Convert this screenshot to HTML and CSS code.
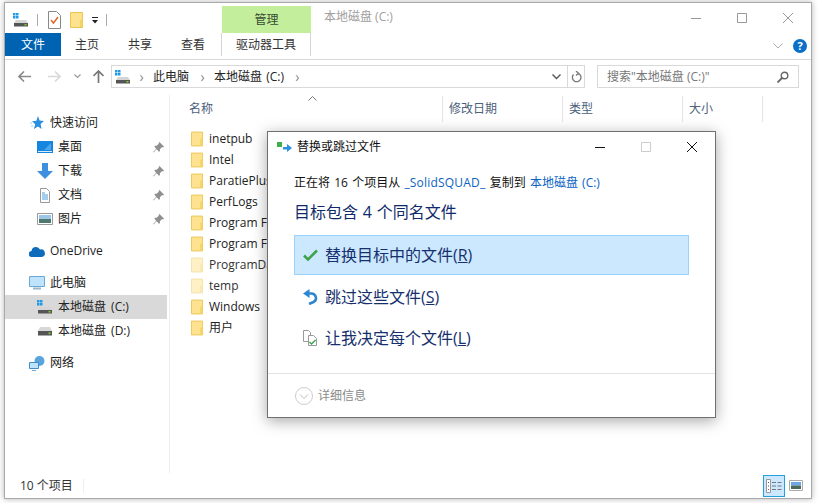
FILE: index.html
```html
<!DOCTYPE html>
<html lang="zh-CN">
<head>
    <meta charset="UTF-8">
    <title>本地磁盘 (C:)</title>
    <link rel="stylesheet" href="styles.css">
</head>
<body>
    <svg class="defs" width="0" height="0">
        <symbol id="folder" viewBox="0 0 13 16">
            <path d="M.5.5h12v15H.5z" fill="#ffe28f" stroke="#eac550"/>
            <path d="M10 15V7.500h2.500V15z" fill="#f7d264"/>
        </symbol>
        <symbol id="drive-win" viewBox="0 0 16 14">
            <path d="M0 0h2.500v2.500H0zM3 0h2.500v2.500H3zM0 3h2.500v2.500H0zM3 3h2.500v2.500H3z" fill="#1e9be8"/>
            <path d="M3 7h10l2 3H1z" fill="#d4d4d4"/>
            <path d="M1 10h14v3.500H1z" fill="#555"/>
            <path d="M11.500 11h2v1.500h-2z" fill="#7ed321"/>
        </symbol>
        <symbol id="pin" viewBox="0 0 12 12">
            <path d="M7 0l5 5-1 1-1-.5L7.500 8 7.500 10l-1 .5L4 8l-3.500 3.500L0 11l3.500-3.500L1.500 5 2 4l2 0 2.500-2.500L6 1z" fill="#8f8f8f"/>
        </symbol>
    </svg>

    <div class="window">
        <header class="titlebar">
            <div class="quick">
                <svg class="ic-drive" width="16" height="14"><use href="#drive-win"/></svg>
                <i class="vsep"></i>
                <svg class="ic-doc" width="13" height="18" viewBox="0 0 13 18">
                    <path d="M.5.5h8l4 4v13H.5z" fill="#fff" stroke="#888"/>
                    <path d="M3 9l2.500 3L10 6" fill="none" stroke="#e2622a" stroke-width="1.400"/>
                </svg>
                <svg class="ic-qfolder" width="13" height="16"><use href="#folder"/></svg>
                <svg class="ic-caret" width="8" height="7" viewBox="0 0 8 7">
                    <path d="M1 0h6v1H1zM1 3h6L4 6.500z" fill="#222"/>
                </svg>
                <i class="vsep"></i>
            </div>
            <div class="context-tab">管理</div>
            <div class="wintitle">本地磁盘 (C:)</div>
            <div class="controls">
                <svg width="10" height="10" viewBox="0 0 10 10"><path d="M0 5.500h10" stroke="#999"/></svg>
                <svg width="10" height="10" viewBox="0 0 10 10"><path d="M.5.500h9v9h-9z" fill="none" stroke="#999"/></svg>
                <svg width="10" height="10" viewBox="0 0 10 10"><path d="M0 0l10 10M10 0L0 10" stroke="#999"/></svg>
            </div>
        </header>

        <nav class="ribbon">
            <div class="tab tab-file">文件</div>
            <div class="tab tab-home">主页</div>
            <div class="tab tab-share">共享</div>
            <div class="tab tab-view">查看</div>
            <div class="tab tab-tools">驱动器工具</div>
            <svg class="ribbon-chev" width="10" height="6" viewBox="0 0 10 6"><path d="M.5.500L5 5 9.500.5" fill="none" stroke="#aaa"/></svg>
            <div class="help">?</div>
        </nav>

        <div class="addressbar">
            <div class="navs">
                <svg width="13" height="11" viewBox="0 0 13 11"><path d="M6 .5L1 5.500l5 5M1 5.500h12" fill="none" stroke="#8a8a8a" stroke-width="1.600"/></svg>
                <svg class="nav-fwd" width="13" height="11" viewBox="0 0 13 11"><path d="M7 .5l5 5-5 5M12 5.500H0" fill="none" stroke="#d8d8d8" stroke-width="1.600"/></svg>
                <svg class="nav-down" width="7" height="5" viewBox="0 0 7 5"><path d="M.5.500l3 3 3-3" fill="none" stroke="#999" stroke-width="1.200"/></svg>
                <svg class="nav-up" width="11" height="13" viewBox="0 0 11 13"><path d="M.5 6l5-5 5 5M5.500 1v12" fill="none" stroke="#777" stroke-width="1.700"/></svg>
            </div>
            <div class="pathbox">
                <svg class="path-drive" width="16" height="14"><use href="#drive-win"/></svg>
                <span class="crumb-sep">›</span>
                <span class="crumb">此电脑</span>
                <span class="crumb-sep">›</span>
                <span class="crumb">本地磁盘 (C:)</span>
                <span class="crumb-sep">›</span>
                <svg class="path-chev" width="9" height="6" viewBox="0 0 9 6"><path d="M.5.500l4 4 4-4" fill="none" stroke="#555" stroke-width="1.400"/></svg>
                <div class="refresh">
                    <svg width="11" height="12" viewBox="0 0 11 12"><path d="M7 2.300A4.300 4.300 0 1 1 2.500 3.500M5 0l2.500 2.300L5 4.500" fill="none" stroke="#777" stroke-width="1.300"/></svg>
                </div>
            </div>
            <div class="searchbox">
                <span>搜索"本地磁盘 (C:)"</span>
                <svg width="12" height="12" viewBox="0 0 12 12"><circle cx="7.500" cy="4.500" r="3.300" fill="none" stroke="#666" stroke-width="1.400"/><path d="M5 7l-4.500 4.500" stroke="#666" stroke-width="1.800"/></svg>
            </div>
        </div>

        <div class="main">
            <aside class="sidebar">
                <div class="nav-item">
                    <svg class="nav-ic" width="14" height="14" viewBox="0 0 14 14"><path d="M8 0l1.600 4.400L14 5l-3.400 3 1 5-3.600-2.600L4 13l1.200-4.800L2 5.300l4.400-.5z" fill="#2b8fe0"/><path d="M0 7h2M1 10h2" stroke="#9fd0f5"/></svg>
                    <span>快速访问</span>
                </div>
                <div class="nav-item sub">
                    <svg class="nav-ic" width="16" height="13" viewBox="0 0 16 13"><path d="M0 0h16v12H0z" fill="#1685e0"/><path d="M1 10h14v1H1z" fill="#d6ecfb"/><path d="M7 9l7-7v7z" fill="#4aa6ea"/></svg>
                    <span>桌面</span>
                    <svg class="pin" width="11" height="11"><use href="#pin"/></svg>
                </div>
                <div class="nav-item sub">
                    <svg class="nav-ic" width="16" height="16" viewBox="0 0 16 16"><path d="M5 0h6v8h5l-8 8-8-8h5z" fill="#3d8fe0"/></svg>
                    <span>下载</span>
                    <svg class="pin" width="11" height="11"><use href="#pin"/></svg>
                </div>
                <div class="nav-item sub">
                    <svg class="nav-ic" width="16" height="15" viewBox="0 0 16 15"><path d="M3.500.5h6l3 3v11h-9z" fill="#fff" stroke="#999"/><path d="M5 5h3M5 7h6M5 9h6M5 11h6" stroke="#4a9ad8"/></svg>
                    <span>文档</span>
                    <svg class="pin" width="11" height="11"><use href="#pin"/></svg>
                </div>
                <div class="nav-item sub">
                    <svg class="nav-ic" width="16" height="12" viewBox="0 0 16 12"><path d="M.5.500h15v11H.5z" fill="#fff" stroke="#999"/><path d="M2 2h12v4H2z" fill="#9cc7e8"/><path d="M2 6h12v4H2z" fill="#4d7a6c"/></svg>
                    <span>图片</span>
                    <svg class="pin" width="11" height="11"><use href="#pin"/></svg>
                </div>
                <div class="nav-item group">
                    <svg class="nav-ic" width="16" height="11" viewBox="0 0 16 11"><path d="M3 11a3 3 0 0 1-.5-6A4.500 4.500 0 0 1 11 3.500 3.800 3.800 0 0 1 13 11z" fill="#0f6cbd"/></svg>
                    <span>OneDrive</span>
                </div>
                <div class="nav-item group">
                    <svg class="nav-ic" width="16" height="14" viewBox="0 0 16 14"><path d="M.5.500h15v10H.5z" fill="#bfe3fa" stroke="#6aa9d6"/><path d="M4 12.500h8" stroke="#9ab6cc" stroke-width="2"/></svg>
                    <span>此电脑</span>
                </div>
                <div class="nav-item sub selected">
                    <svg class="nav-ic" width="16" height="14"><use href="#drive-win"/></svg>
                    <span>本地磁盘 (C:)</span>
                </div>
                <div class="nav-item sub">
                    <svg class="nav-ic" width="16" height="9" viewBox="0 0 16 9"><path d="M3 0h10l2 4H1z" fill="#d8d8d8"/><path d="M1 4h14v4.500H1z" fill="#555"/><path d="M11.500 5.500h2V7h-2z" fill="#7ed321"/></svg>
                    <span>本地磁盘 (D:)</span>
                </div>
                <div class="nav-item group">
                    <svg class="nav-ic" width="16" height="15" viewBox="0 0 16 15"><circle cx="10.500" cy="5" r="5" fill="#5aa4de"/><path d="M.5 6.500h9v6h-9z" fill="#bfe3fa" stroke="#3f8ccb"/><path d="M3 14.500h4" stroke="#7aa8cc"/></svg>
                    <span>网络</span>
                </div>
            </aside>

            <section class="files">
                <div class="columns">
                    <svg class="sort" width="9" height="5" viewBox="0 0 9 5"><path d="M.5 4.500l4-4 4 4" fill="none" stroke="#777"/></svg>
                    <div class="col col-name">名称</div>
                    <div class="col col-date">修改日期</div>
                    <div class="col col-type">类型</div>
                    <div class="col col-size">大小</div>
                </div>
                <ul class="list">
                    <li><svg width="12" height="16"><use href="#folder"/></svg>inetpub</li>
                    <li><svg width="12" height="16"><use href="#folder"/></svg>Intel</li>
                    <li><svg width="12" height="16"><use href="#folder"/></svg>ParatiePlus</li>
                    <li><svg width="12" height="16"><use href="#folder"/></svg>PerfLogs</li>
                    <li><svg width="12" height="16"><use href="#folder"/></svg>Program Files</li>
                    <li><svg width="12" height="16"><use href="#folder"/></svg>Program Files (x86)</li>
                    <li class="hidden-item"><svg width="12" height="16"><use href="#folder"/></svg><span>ProgramData</span></li>
                    <li class="hidden-item"><svg width="12" height="16"><use href="#folder"/></svg><span>temp</span></li>
                    <li><svg width="12" height="16"><use href="#folder"/></svg>Windows</li>
                    <li><svg width="12" height="16"><use href="#folder"/></svg>用户</li>
                </ul>
            </section>
        </div>

        <footer class="statusbar">
            <span class="count">10 个项目</span>
            <i class="status-sep"></i>
            <div class="views">
                <div class="view-btn active">
                    <svg width="16" height="14" viewBox="0 0 16 14"><path d="M.5.500h4v13h-4z" fill="#fff" stroke="#999"/><path d="M2 3h1v1H2zM2 6.500h1v1H2z" fill="#555"/><path d="M2 10h1v1H2z" fill="#c33"/><path d="M6 3.500h4M11.500 3.500h4M6 7h4M11.500 7h4M6 10.500h4M11.500 10.500h4" stroke="#777"/></svg>
                </div>
                <svg width="14" height="11" viewBox="0 0 14 11"><path d="M.5.500h13v10H.5z" fill="#fff" stroke="#aaa"/><path d="M2 2h10v3.500H2z" fill="#6aa6e8"/><path d="M2 5.500h10V9H2z" fill="#4a6a5a"/></svg>
            </div>
        </footer>
    </div>

    <div class="dialog">
        <div class="dlg-title">
            <svg width="15" height="10" viewBox="0 0 15 10"><path d="M0 0h5v5H0z" fill="#3fae49"/><path d="M6 5h4V2l5 4-5 4V7.500H6z" fill="#2f8fe0"/></svg>
            <span class="dlg-name">替换或跳过文件</span>
            <div class="dlg-controls">
                <svg width="10" height="10" viewBox="0 0 10 10"><path d="M0 5.500h10" stroke="#111"/></svg>
                <svg width="10" height="10" viewBox="0 0 10 10"><path d="M.5.500h9v9h-9z" fill="none" stroke="#ccc"/></svg>
                <svg width="10" height="10" viewBox="0 0 10 10"><path d="M0 0l10 10M10 0L0 10" stroke="#111"/></svg>
            </div>
        </div>
        <div class="dlg-body">
            <p class="dlg-status">正在将 16 个项目从 <a class="src">_SolidSQUAD_</a> 复制到 <a>本地磁盘 (C:)</a></p>
            <h2 class="dlg-heading">目标包含 4 个同名文件</h2>
            <div class="option active">
                <svg width="15" height="12" viewBox="0 0 15 12"><path d="M1 6.500l4 4L14 1.500" fill="none" stroke="#3fa34d" stroke-width="2.600"/></svg>
                <span>替换目标中的文件(<u>R</u>)</span>
            </div>
            <div class="option">
                <svg width="15" height="16" viewBox="0 0 15 16"><path d="M0 4.500L6.500 0v9z" fill="#2f86d0"/><path d="M5 4.500h3.500a4.500 4.500 0 0 1 2 8.500L6 15" fill="none" stroke="#2f86d0" stroke-width="2.600"/></svg>
                <span>跳过这些文件(<u>S</u>)</span>
            </div>
            <div class="option">
                <svg width="15" height="16" viewBox="0 0 15 16"><path d="M.5.500h5l2 2v9h-7z" fill="#fff" stroke="#999"/><path d="M5.500 5.500h5l3 3v7h-8z" fill="#fff" stroke="#999"/><path d="M6.500 12l2 2 4-4" fill="none" stroke="#3fa34d" stroke-width="1.500"/></svg>
                <span>让我决定每个文件(<u>L</u>)</span>
            </div>
        </div>
        <div class="dlg-footer">
            <svg width="18" height="18" viewBox="0 0 18 18"><circle cx="9" cy="9" r="8.500" fill="#fff" stroke="#ccc"/><path d="M5 7.500l4 4 4-4" fill="none" stroke="#bbb"/></svg>
            <span>详细信息</span>
        </div>
    </div>
</body>
</html>
```

FILE: styles.css
```css
* {
    margin: 0;
    padding: 0;
    box-sizing: border-box;
}

body {
    position: relative;
    width: 818px;
    height: 503px;
    overflow: hidden;
    padding: 2px 6px 4px 4px;
    background-color: #fff;
    color: #1a1a1a;
    font: 12px/16px "Open Sans", "Noto Sans CJK SC", sans-serif;
}

.defs {
    position: absolute;
}

.window {
    display: flex;
    flex-direction: column;
    height: 497px;
    background-color: #fff;
    border: 1px solid #a9a9a9;
    box-shadow: 0 0 6px rgba(0, 0, 0, 0.3);
}

/* title bar */
.titlebar {
    display: flex;
    align-items: flex-end;
    height: 30px;
    flex: none;
}

.quick {
    display: flex;
    align-items: center;
    width: 217px;
    height: 27px;
    padding-left: 8px;
    flex: none;
}

.quick svg {
    display: block;
}

.vsep {
    width: 1px;
    height: 12px;
    margin: 0 10px 0 8px;
    background-color: #aaa;
}

.ic-qfolder {
    margin-left: 9px;
}

.ic-caret {
    margin: 2px 0 0 8px;
}

.ic-caret + .vsep {
    margin-left: 7px;
}

.context-tab {
    width: 89px;
    height: 27px;
    flex: none;
    background-color: #c3ee9b;
    color: #3a4a32;
    text-align: center;
    line-height: 27px;
}

.wintitle {
    margin-left: 13px;
    height: 27px;
    color: #a0a0a0;
    line-height: 21px;
}

.controls {
    display: flex;
    gap: 36px;
    margin-left: auto;
    padding-right: 18px;
    align-self: center;
}

.controls svg {
    display: block;
}

/* ribbon tabs */
.ribbon {
    display: flex;
    height: 27px;
    flex: none;
    align-items: flex-start;
    border-bottom: 1px solid #dadada;
}

.tab {
    height: 23px;
    line-height: 23px;
    color: #333;
    text-align: center;
}

.tab-file {
    width: 56px;
    background-color: #0063b1;
    color: #fff;
}

.tab-home {
    margin-left: 14px;
}

.tab-share {
    margin-left: 29px;
}

.tab-view {
    margin-left: 29px;
}

.tab-tools {
    width: 90px;
    margin-left: 16px;
    border-left: 1px solid #d5d5d5;
    border-right: 1px solid #d5d5d5;
}

.ribbon-chev {
    margin: 10px 0 0 auto;
}

.help {
    width: 14px;
    height: 14px;
    margin: 6px 4px 0 10px;
    border-radius: 50%;
    background-color: #0a6fc9;
    color: #fff;
    font-size: 11px;
    font-weight: 700;
    line-height: 14px;
    text-align: center;
}

/* address bar */
.addressbar {
    display: flex;
    align-items: flex-start;
    height: 35px;
    flex: none;
    padding-top: 5px;
}

.navs {
    display: flex;
    align-items: center;
    width: 106px;
    height: 23px;
    padding-left: 13px;
    flex: none;
}

.nav-fwd {
    margin-left: 17px;
}

.nav-down {
    margin-left: 13px;
}

.nav-up {
    margin-left: 12px;
}

.pathbox {
    display: flex;
    align-items: center;
    width: 474px;
    height: 23px;
    flex: none;
    border: 1px solid #d9d9d9;
    color: #222;
}

.path-drive {
    margin-left: 3px;
}

.crumb-sep {
    width: 9px;
    margin: 0 7px 0 6px;
    color: #888;
    font-size: 14px;
    text-align: center;
}

.crumb + .crumb-sep {
    margin-left: 9px;
}

.crumb {
    word-spacing: 1px;
}

.path-chev {
    margin: 0 6px 0 auto;
}

.refresh {
    display: flex;
    align-items: center;
    justify-content: center;
    width: 17px;
    height: 100%;
    border-left: 1px solid #d9d9d9;
}

.searchbox {
    display: flex;
    align-items: center;
    justify-content: space-between;
    width: 202px;
    height: 23px;
    margin-left: 12px;
    padding: 0 9px;
    border: 1px solid #d9d9d9;
    color: #777;
}

/* main area */
.main {
    display: flex;
    flex: 1;
    min-height: 0;
}

.sidebar {
    width: 165px;
    flex: none;
    padding-top: 16px;
    border-right: 1px solid #efefef;
}

.nav-item {
    display: flex;
    align-items: center;
    height: 24px;
    width: 162px;
    padding-left: 24px;
    color: #222;
}

.nav-ic {
    width: 16px;
    margin-right: 5px;
    flex: none;
}

.sub {
    padding-left: 32px;
    word-spacing: 2px;
}

.group {
    margin-top: 8px;
}

.selected {
    background-color: #d9d9d9;
}

.pin {
    margin-left: auto;
    margin-right: 3px;
}

.files {
    flex: 1;
    min-width: 0;
}

.columns {
    position: relative;
    display: flex;
    height: 27px;
    margin-top: 1px;
    padding-left: 13px;
    color: #4c607a;
}

.col {
    height: 26px;
    padding-left: 6px;
    line-height: 25px;
    border-right: 1px solid #e5e5e5;
}

.col-name {
    width: 260px;
}

.col-date,
.col-type {
    width: 120px;
}

.col-size {
    width: 80px;
}

.sort {
    position: absolute;
    left: 138px;
    top: 0;
}

.list {
    list-style: none;
    padding: 5px 0 0 21px;
}

.list li {
    display: flex;
    align-items: center;
    gap: 6px;
    height: 21px;
    white-space: nowrap;
    color: #222;
}

.hidden-item svg {
    opacity: 0.5;
}

.hidden-item span {
    color: #333;
}

/* status bar */
.statusbar {
    display: flex;
    align-items: center;
    height: 25px;
    flex: none;
    padding-left: 15px;
    color: #333;
}

.status-sep {
    width: 1px;
    height: 14px;
    margin-left: 10px;
    background-color: #eee;
}

.views {
    display: flex;
    align-items: center;
    gap: 4px;
    margin-left: auto;
    padding-right: 8px;
}

.view-btn {
    display: flex;
    align-items: center;
    justify-content: center;
    width: 22px;
    height: 22px;
}

.view-btn.active {
    background-color: #cce8ff;
    border: 1px solid #26a0da;
}

/* replace dialog */
.dialog {
    position: absolute;
    left: 267px;
    top: 131px;
    width: 449px;
    height: 287px;
    background-color: #fff;
    border: 1px solid #707070;
    box-shadow: 0 3px 14px rgba(0, 0, 0, 0.35);
}

.dlg-title {
    display: flex;
    align-items: center;
    height: 28px;
    padding: 1px 0 0 9px;
}

.dlg-name {
    margin-left: 5px;
    color: #111;
}

.dlg-controls {
    display: flex;
    gap: 36px;
    margin-left: auto;
    padding-right: 18px;
}

.dlg-controls svg {
    display: block;
}

.dlg-body {
    padding: 15px 26px 0;
    height: 214px;
    border-bottom: 1px solid #e3e3e3;
}

.dlg-status {
    color: #111;
    white-space: nowrap;
    word-spacing: 1.100px;
}

.dlg-status a {
    color: #0a63c4;
}

.dlg-status .src {
    letter-spacing: 0.200px;
}

.dlg-heading {
    margin-top: 9px;
    color: #0e2a6b;
    font-size: 16px;
    font-weight: 400;
    line-height: 24px;
    word-spacing: 0.600px;
}

.option {
    display: flex;
    align-items: center;
    gap: 7px;
    height: 40px;
    margin-top: 1px;
    padding-left: 8px;
    border: 1px solid transparent;
    color: #16306e;
    font-size: 16px;
}

.option.active {
    margin-top: 11px;
    background-color: #cce8ff;
    border-color: #99d1ff;
}

.option.active + .option {
    margin-top: 2px;
}

.option svg {
    width: 15px;
    flex: none;
}

.dlg-footer {
    display: flex;
    align-items: center;
    gap: 5px;
    height: 43px;
    padding-left: 27px;
    color: #8a8a8a;
}
```
